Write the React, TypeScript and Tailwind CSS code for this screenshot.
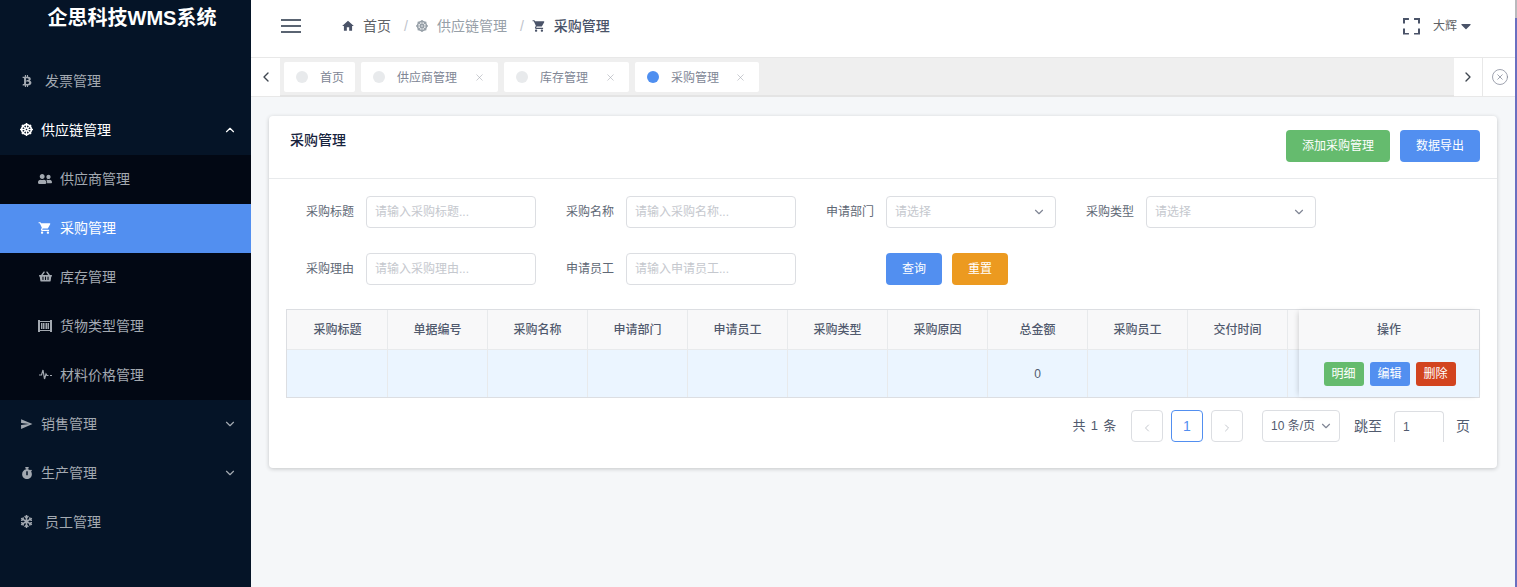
import {
  FaBtc,
  FaDharmachakra,
  FaUserFriends,
  FaShoppingBasket,
  FaStopwatch,
  FaSnowflake,
  FaCaretDown,
} from "react-icons/fa";
import { MdHome, MdSend, MdShoppingCart } from "react-icons/md";
import { ChevronUp, ChevronDown, ChevronLeft, ChevronRight, X, CircleX } from "lucide-react";

const font = "font-['Liberation_Sans','Noto_Sans_CJK_SC',sans-serif]";

const PalletIcon = () => (
  <svg width="14" height="12" viewBox="0 0 14 12" fill="currentColor">
    <path d="M0 0h2v12H0zM12 0h2v12h-2zM2 1h10v1H2zM2 10h10v1H2zM3 3h1.500v6H3zM5 3h1.500v6H5zM7.500 3H9v6H7.500zM9.500 3H11v6H9.500z" />
  </svg>
);

const PulseIcon = () => (
  <svg width="13" height="11" viewBox="0 0 13 11" fill="none" stroke="currentColor" strokeWidth="1.200">
    <path d="M0 6h2.500L4 1l1.500 9L7 5l1 1.500h1.500M11 6.500h2" />
  </svg>
);

const TopItem = ({ icon, label, arrow, active, gap }: any) => (
  <div className={`h-[49px] flex items-center pl-5 pr-[14px] pb-[2px] text-sm ${active ? "text-white" : "text-[#a3a9b1]"}`}>
    <span className="w-[13px] flex justify-center">{icon}</span>
    <span className={gap ? "ml-[12px]" : "ml-2"}>{label}</span>
    {arrow === "up" && <ChevronUp size={14} className="ml-auto" />}
    {arrow === "down" && <ChevronDown size={14} className="ml-auto" />}
  </div>
);

const SubItem = ({ icon, label, active }: any) => (
  <div className={`h-[49px] flex items-center pl-[38px] pb-[2px] text-sm ${active ? "bg-[#528ff0] text-white" : "text-[#a3a9b1]"}`}>
    <span className="w-[14px] flex justify-center">{icon}</span>
    <span className="ml-2">{label}</span>
  </div>
);

const Sidebar = () => (
  <div className="w-[251px] shrink-0 bg-[#051427] h-[587px]">
    <div className="h-[57px] text-center text-white text-[20px] font-bold leading-[36px] pl-[13px]">企思科技WMS系统</div>
    <TopItem icon={<FaBtc size={12} />} label="发票管理" gap />
    <TopItem icon={<FaDharmachakra size={13} />} label="供应链管理" arrow="up" active />
    <div className="bg-[#020814]">
      <SubItem icon={<FaUserFriends size={14} />} label="供应商管理" />
      <SubItem icon={<MdShoppingCart size={14} />} label="采购管理" active />
      <SubItem icon={<FaShoppingBasket size={13} />} label="库存管理" />
      <SubItem icon={<PalletIcon />} label="货物类型管理" />
      <SubItem icon={<PulseIcon />} label="材料价格管理" />
    </div>
    <TopItem icon={<MdSend size={14} />} label="销售管理" arrow="down" />
    <TopItem icon={<FaStopwatch size={12} />} label="生产管理" arrow="down" />
    <TopItem icon={<FaSnowflake size={13} />} label="员工管理" gap />
  </div>
);

const Header = () => (
  <div className="h-[58px] bg-white border-b border-[#e8e8e8] flex items-center pl-[30px] pr-[43px] pb-[5px]">
    <div className="w-[20px] flex flex-col gap-[4px]">
      <div className="h-[2px] bg-[#5a6472]" />
      <div className="h-[2px] bg-[#5a6472]" />
      <div className="h-[2px] bg-[#5a6472]" />
    </div>
    <MdHome size={14} className="ml-[40px] text-[#4a5368]" />
    <span className="ml-[8px] text-sm text-[#606266]">首页</span>
    <span className="ml-[13px] text-sm text-[#c0c4cc]">/</span>
    <FaDharmachakra size={12} className="ml-[8px] text-[#97a0a8]" />
    <span className="ml-[9px] text-sm text-[#97a0a8]">供应链管理</span>
    <span className="ml-[13px] text-sm text-[#c0c4cc]">/</span>
    <MdShoppingCart size={14} className="ml-[8px] text-[#4a5368]" />
    <span className="ml-[8px] text-sm font-medium text-[#4a5368]">采购管理</span>
    <div className="ml-auto w-[17px] h-[17px] border-2 border-[#4a5368] [clip-path:polygon(0_0,35%_0,35%_100%,65%_100%,65%_0,100%_0,100%_35%,0_35%,0_65%,100%_65%,100%_100%,0_100%)]" />
    <span className="ml-[13px] text-xs text-[#606266]">大辉</span>
    <FaCaretDown size={16} className="ml-[1px] text-[#4a5368]" />
  </div>
);

const Tab = ({ label, active, close, w }: any) => (
  <div className={`h-[30px] bg-white rounded-[2px] flex items-center pl-3 pr-[13px] text-xs text-[#808695] whitespace-nowrap ${w}`}>
    <span className={`w-3 h-3 shrink-0 rounded-full ${active ? "bg-[#4f8ff0]" : "bg-[#e8eaec]"}`} />
    <span className="ml-3 pt-[2px]">{label}</span>
    {close && <X size={11} strokeWidth={1.2} className="ml-auto mt-[2px] text-[#a0a4ac]" />}
  </div>
);

const Tabs = () => (
  <div className="h-[39px] flex bg-white">
    <div className="w-[29px] flex items-center justify-center border-b border-[#e8e8e8]">
      <ChevronLeft size={16} className="text-[#3f4650]" />
    </div>
    <div className="flex-1 bg-[#efefef] border-b-2 border-[#e4e4e4] flex items-center gap-[6px] pl-[4px]">
      <Tab label="首页" w="w-[71px]" />
      <Tab label="供应商管理" close w="w-[137px]" />
      <Tab label="库存管理" close w="w-[125px]" />
      <Tab label="采购管理" active close w="w-[124px]" />
    </div>
    <div className="w-[29px] flex items-center justify-center border-r border-b border-[#e8e8e8]">
      <ChevronRight size={16} className="text-[#3f4650]" />
    </div>
    <div className="w-[34px] flex items-center justify-center border-b border-[#e8e8e8]">
      <CircleX size={18} strokeWidth={1} className="text-[#808695]" />
    </div>
  </div>
);

const Field = ({ label, hint, select }: any) => (
  <div className="flex items-center w-[260px]">
    <span className="w-[80px] pr-3 text-right text-xs text-[#606875]">{label}</span>
    <div className="w-[170px] h-8 rounded border border-[#dcdee2] bg-white flex items-center pl-2 pr-[9px] text-xs text-[#c5c8ce]">
      <span>{hint}</span>
      {select && <ChevronDown size={14} className="ml-auto text-[#808695]" />}
    </div>
  </div>
);

const Btn = ({ label, color, w }: any) => (
  <div className={`h-8 rounded flex items-center justify-center text-xs text-white ${color} ${w}`}>{label}</div>
);

const columns = ["采购标题", "单据编号", "采购名称", "申请部门", "申请员工", "采购类型", "采购原因", "总金额", "采购员工", "交付时间"];

const DataTable = () => (
  <div className="ml-[17px] mr-[17px] border border-[#dcdee2] relative">
    <div className="flex h-[40px] pl-[1px] bg-[#f8f8f9] border-b border-[#e8eaec]">
      {columns.map((c) => (
        <div key={c} className="w-[100px] shrink-0 border-r border-[#e8eaec] flex items-center justify-center text-xs font-medium text-[#515a6e]">{c}</div>
      ))}
    </div>
    <div className="flex h-[47px] pl-[1px] bg-[#ebf5ff]">
      {columns.map((c) => (
        <div key={c} className="w-[100px] shrink-0 border-r border-[#e8eaec] flex items-center justify-center text-xs text-[#515a6e]">{c === "总金额" ? "0" : ""}</div>
      ))}
    </div>
    <div className="absolute right-0 top-0 bottom-0 w-[180px] shadow-[-2px_0_6px_-2px_rgba(0,0,0,0.2)]">
      <div className="h-[40px] bg-[#f8f8f9] border-b border-[#e8eaec] flex items-center justify-center text-xs font-medium text-[#515a6e]">操作</div>
      <div className="h-[47px] bg-[#ebf5ff] flex items-center justify-center gap-[6px] pl-[1px]">
        <div className="w-10 h-6 rounded-[3px] bg-[#65bb6e] text-white text-xs flex items-center justify-center">明细</div>
        <div className="w-10 h-6 rounded-[3px] bg-[#528ff0] text-white text-xs flex items-center justify-center">编辑</div>
        <div className="w-10 h-6 rounded-[3px] bg-[#d2441f] text-white text-xs flex items-center justify-center">删除</div>
      </div>
    </div>
  </div>
);

const Pager = () => (
  <div className="mt-[12px] mr-[27px] flex items-center justify-end text-[#515a6e]">
    <span className="text-[13px] tracking-[0.8px]">共 1 条</span>
    <div className="ml-[14px] w-8 h-8 rounded border border-[#dcdee2] flex items-center justify-center pt-[3px] text-[#c5c8ce]"><ChevronLeft size={12} /></div>
    <div className="ml-2 w-8 h-8 rounded border border-[#528ff0] flex items-center justify-center text-sm text-[#528ff0]">1</div>
    <div className="ml-2 w-8 h-8 rounded border border-[#dcdee2] flex items-center justify-center pt-[3px] text-[#c5c8ce]"><ChevronRight size={12} /></div>
    <div className="ml-[19px] w-[78px] h-8 rounded border border-[#dcdee2] flex items-center pl-2 text-xs">
      10 条/页<ChevronDown size={14} className="ml-1 text-[#808695]" />
    </div>
    <span className="ml-[14px] text-sm">跳至</span>
    <div className="ml-3 w-[50px] h-[31px] mt-[1px] rounded-t border border-b-0 border-[#dcdee2] flex items-center pl-2 text-xs">1</div>
    <span className="ml-3 text-sm">页</span>
  </div>
);

export default function App() {
  return (
    <div className={`relative flex w-[1517px] h-[587px] overflow-hidden bg-[#f5f7f9] ${font}`}>
      <Sidebar />
      <div className="flex-1 min-w-0">
        <Header />
        <Tabs />
        <div className="mt-[19px] ml-[18px] w-[1228px] h-[352px] bg-white rounded shadow-[0_1px_4px_rgba(0,0,0,0.2)]">
          <div className="h-[63px] border-b border-[#e8eaec] flex justify-between pl-[21px] pr-[17px] pt-[14px]">
            <span className="text-sm font-medium text-[#17233d] leading-[20px]">采购管理</span>
            <div className="flex gap-[10px]">
              <Btn label="添加采购管理" color="bg-[#65bb6e]" w="w-[104px]" />
              <Btn label="数据导出" color="bg-[#528ff0]" w="w-[80px]" />
            </div>
          </div>
          <div className="pt-[17px] flex flex-col gap-[25px] pl-[17px]">
            <div className="flex">
              <Field label="采购标题" hint="请输入采购标题..." />
              <Field label="采购名称" hint="请输入采购名称..." />
              <Field label="申请部门" hint="请选择" select />
              <Field label="采购类型" hint="请选择" select />
            </div>
            <div className="flex">
              <Field label="采购理由" hint="请输入采购理由..." />
              <Field label="申请员工" hint="请输入申请员工..." />
              <div className="ml-[80px] flex gap-[10px]">
                <Btn label="查询" color="bg-[#528ff0]" w="w-[56px]" />
                <Btn label="重置" color="bg-[#ec9a20]" w="w-[56px]" />
              </div>
            </div>
          </div>
          <div className="mt-[24px]">
            <DataTable />
            <Pager />
          </div>
        </div>
      </div>
      <div className="absolute right-0 top-0 w-[2px] h-[18px] bg-[#b9b9bd]" />
      <div className="absolute right-0 top-[18px] bottom-0 w-[2px] bg-[#6a6fc0]" />
    </div>
  );
}
